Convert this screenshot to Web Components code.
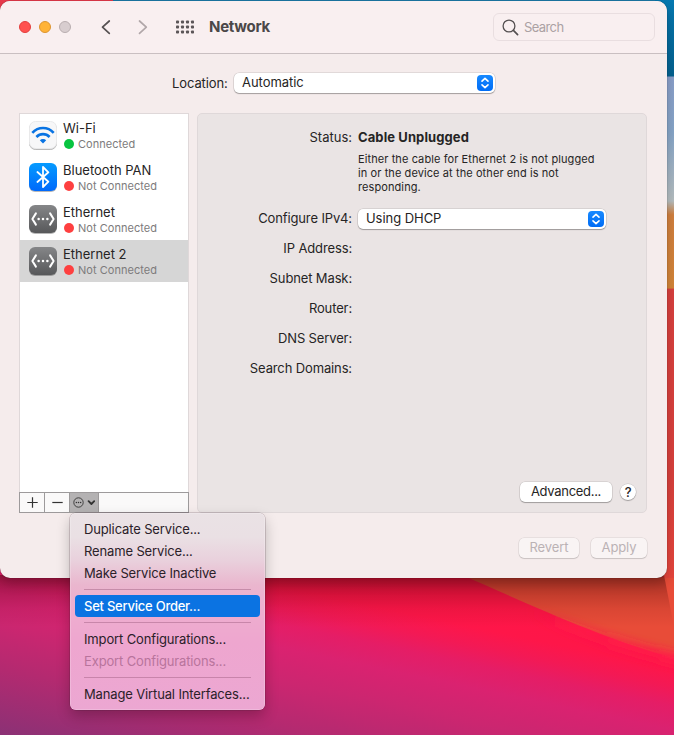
<!DOCTYPE html>
<html lang="en">
<head>
<meta charset="utf-8">
<title>Network</title>
<style>
html,body{margin:0;padding:0;width:674px;height:735px;overflow:hidden}
body{font-family:Inter,"Liberation Sans",sans-serif;font-size:13px;color:#262424;-webkit-font-smoothing:antialiased}
</style>
</head>
<body>
<network-desktop></network-desktop>
<script>
const define = (name, html, ready) => {
  const tpl = document.createElement('template');
  tpl.innerHTML = '<style>*{box-sizing:border-box}:host{box-sizing:border-box}</style>' + html;
  customElements.define(name, class extends HTMLElement {
    constructor() {
      super();
      this.attachShadow({mode: 'open'}).append(tpl.content.cloneNode(true));
    }
    connectedCallback() { if (ready) ready(this, this.shadowRoot); }
  });
};

define('wall-paper', `
<style>:host{display:block;width:674px;height:735px}svg{display:block}</style>
<svg width="674" height="735" viewBox="0 0 674 735">
<defs>
<linearGradient id="base" x1="0" y1="500" x2="-47" y2="725" gradientUnits="userSpaceOnUse">
<stop offset="0" stop-color="#ff1646"/><stop offset=".12" stop-color="#fe1649"/><stop offset=".2" stop-color="#f31955"/><stop offset=".28" stop-color="#e51d66"/><stop offset=".38" stop-color="#da2270"/><stop offset=".52" stop-color="#cc2670"/><stop offset=".72" stop-color="#b32a70"/><stop offset="1" stop-color="#8b3175"/></linearGradient>
<linearGradient id="orange" x1="0" y1="580" x2="-8" y2="658" gradientUnits="userSpaceOnUse"><stop offset="0" stop-color="#e84c38"/><stop offset=".5" stop-color="#f2453c"/><stop offset=".9" stop-color="#fd3242"/><stop offset="1.0" stop-color="#ff2946"/></linearGradient>
<linearGradient id="fade" x1="530" y1="0" x2="674" y2="0" gradientUnits="userSpaceOnUse"><stop offset="0" stop-color="#ff1b48" stop-opacity="0"/><stop offset="1" stop-color="#ff1b48"/></linearGradient>
<filter id="soft" x="-10%" y="-30%" width="120%" height="160%"><feGaussianBlur stdDeviation="4"/></filter>
<linearGradient id="edge" x1="0" y1="0" x2="0" y2="600" gradientUnits="userSpaceOnUse">
<stop offset="0" stop-color="#0678b0"/><stop offset=".127" stop-color="#04618f"/><stop offset=".128" stop-color="#8a9fca"/><stop offset=".22" stop-color="#86a5c8"/><stop offset=".335" stop-color="#b5bdbf"/><stop offset=".358" stop-color="#d17f3e"/><stop offset=".48" stop-color="#d38538"/><stop offset=".482" stop-color="#d8403e"/><stop offset=".8" stop-color="#d8403c"/><stop offset="1" stop-color="#e8463c"/></linearGradient>
<linearGradient id="shade" x1="0" y1="575" x2="0" y2="627" gradientUnits="userSpaceOnUse"><stop offset="0" stop-color="#300" stop-opacity=".4"/><stop offset=".3" stop-color="#300" stop-opacity=".24"/><stop offset=".65" stop-color="#300" stop-opacity=".08"/><stop offset="1" stop-color="#300" stop-opacity="0"/></linearGradient>
</defs>
<rect width="674" height="735" fill="url(#base)"/>
<path d="M462 575C520 600 600 638 674 658V540H462Z" fill="url(#orange)"/>
<path d="M530 610C570 628 630 650 690 662" fill="none" stroke="url(#fade)" stroke-width="12" filter="url(#soft)"/>
<rect x="640" width="34" height="578" fill="url(#edge)"/>
<rect width="114" height="20" fill="#e83a4c"/><rect x="113" width="561" height="20" fill="#1c7cab"/>
<rect x="655" width="19" height="40" fill="url(#edge)"/>
<path d="M0 575H664L674 627H0Z" fill="url(#shade)"/>
</svg>`);

define('mac-window', `
<style>
:host{display:flex;flex-direction:column;width:667px;height:577px;background:#f5ecec;border-radius:10px;box-shadow:0 0 1px rgba(0,0,0,.6),0 6px 12px rgba(0,0,0,.2);overflow:hidden}
</style><slot></slot>`);

define('tool-bar', `
<style>
:host{display:flex;align-items:center;height:53px;background:#f9eff0;border-bottom:1px solid #c9bfc1;padding:0 12px 0 19px;flex:none}
i{display:block;width:12px;height:12px;border-radius:50%;margin-right:8px;border:1px solid}
.r{background:#ff5250;border-color:#e33e3d}.y{background:#ffb338;border-color:#dd9430}.g{background:#d8cdcf;border-color:#b9aeb0}
svg{display:block;flex:none}
b{font-size:15px;font-weight:700;color:#4b4748;margin-left:15px;letter-spacing:-.3px;padding-bottom:1px}
.f{margin-left:auto;display:flex;align-items:center;width:162px;height:28px;border:1px solid #e9dee0;border-radius:6px;padding-left:8px;color:#aba1a3;letter-spacing:-.6px}
.f span{margin-left:5px;letter-spacing:-.6px}
</style>
<i class="r"></i><i class="y"></i><i class="g"></i>
<svg style="margin-left:17px" width="58" height="20" viewBox="0 0 58 20" fill="none" stroke-width="1.7" stroke-linecap="round" stroke-linejoin="round"><path d="M13.3 4 6.5 10.2l6.8 6.2" stroke="#565152"/><path d="M43.5 4 50.3 10.2l-6.8 6.2" stroke="#b1a7a9"/></svg>
<svg id="grid" style="margin-left:22px" width="18" height="14" viewBox="0 0 18 14" fill="#5c5658"></svg>
<b>Network</b>
<div class="f"><svg width="17" height="17" viewBox="0 0 17 17" fill="none" stroke="#555051" stroke-width="1.3" stroke-linecap="round"><circle cx="7" cy="7" r="5.9"/><path d="M11.4 11.4 15.6 15.6" stroke-width="1.7"/></svg><span>Search</span></div>`,
(el, root) => {
  let s = '';
  for (let y = 0; y < 3; y++) for (let x = 0; x < 4; x++) s += `<rect x="${x*5}" y="${.5+y*5}" width="3" height="3" rx=".8"/>`;
  root.getElementById('grid').innerHTML = s;
});

define('pop-up', `
<style>
:host{display:flex;align-items:center;justify-content:space-between;height:20px;background:#fff;border-radius:5px;padding:0 2px 0 8px;box-shadow:0 0 0 .5px rgba(0,0,0,.16),0 1px 1px rgba(0,0,0,.27);letter-spacing:-.05px}
svg{display:block}
span{padding-bottom:2px}
</style><span><slot></slot></span>
<svg width="16" height="16" viewBox="0 0 16 16"><defs><linearGradient id="b" x2="0" y2="1"><stop stop-color="#1789ff"/><stop offset="1" stop-color="#006cf5"/></linearGradient></defs><rect width="16" height="16" rx="4" fill="url(#b)"/><path d="M5 6.2 8 3.4l3 2.8M5 9.8l3 2.8 3-2.8" fill="none" stroke="#fff" stroke-width="1.6" stroke-linecap="round" stroke-linejoin="round"/></svg>`);

define('push-button', `
<style>
:host{display:flex;align-items:center;justify-content:center;height:20px;padding-bottom:2px;background:#fff;border-radius:5px;letter-spacing:-.3px;box-shadow:0 0 0 .5px rgba(0,0,0,.15),0 1px 1px rgba(0,0,0,.26)}
:host([disabled]){background:#f9f4f4;color:#bbb2b4;letter-spacing:-.1px;box-shadow:0 0 0 .5px rgba(0,0,0,.11),0 1px 1px rgba(0,0,0,.13)}
:host([round]){border-radius:50%;width:16px;height:16px;font-weight:500;padding:0}
</style><slot></slot>`);

const icons = {
  wifi: `<rect x=".5" y=".5" width="27" height="27" rx="6" fill="#f7f7f8" stroke="#e9e9ea"/><g fill="none" stroke="#0873e3" stroke-width="2.6"><path d="M3.3 11.8C9.2 5.4 18.8 5.4 24.7 11.8"/><path d="M7.4 16C11.2 12.2 16.8 12.2 20.6 16"/></g><path d="M10.8 19.2C12.5 17.6 15.5 17.6 17.2 19.2L14 22.5Z" fill="#0873e3"/>`,
  bt: `<defs><linearGradient id="g" x2="0" y2="1"><stop stop-color="#059bff"/><stop offset="1" stop-color="#0069fb"/></linearGradient></defs><rect width="28" height="28" rx="6" fill="url(#g)"/><path d="M8.4 9 19.4 18.7 14 24V4L19.4 9.3 8.4 19" fill="none" stroke="#fff" stroke-width="1.8" stroke-linejoin="round" stroke-linecap="round"/>`,
  eth: `<defs><linearGradient id="g" x2="0" y2="1"><stop stop-color="#858688"/><stop offset="1" stop-color="#57585a"/></linearGradient></defs><rect width="28" height="28" rx="6" fill="url(#g)"/><g fill="none" stroke="#fff" stroke-width="2" stroke-linecap="round" stroke-linejoin="round"><path d="M6.9 8.4 3.4 14l3.5 5.6M21.1 8.4 24.6 14l-3.5 5.6"/></g><g fill="#fff"><circle cx="9.6" cy="14" r="1.25"/><circle cx="14" cy="14" r="1.25"/><circle cx="18.4" cy="14" r="1.25"/></g>`
};
define('service-row', `
<style>
:host{display:flex;align-items:center;gap:6px;height:42px;padding-left:9px}
:host([selected]){background:#d6d6d6}
svg{display:block;flex:none;overflow:visible;filter:drop-shadow(0 1px .7px rgba(0,0,0,.28))}
.t{display:flex;flex-direction:column;gap:1px;padding-top:1px}
.n{height:16px;line-height:16px;letter-spacing:0}
.s{display:flex;align-items:center;height:15px;font-size:11px;color:#7d7b7c;gap:4px;letter-spacing:.03px}
.s i{width:10px;height:10px;border-radius:50%;background:#fe4040;margin-left:1px}
:host([on]) .s i{background:#08c440}
</style>
<svg width="28" height="28" viewBox="0 0 28 28"></svg>
<div class="t"><div class="n"><slot></slot></div><div class="s"><i></i><span></span></div></div>`,
(el, root) => {
  root.querySelector('svg').innerHTML = icons[el.getAttribute('icon')];
  root.querySelector('span').textContent = el.hasAttribute('on') ? 'Connected' : 'Not Connected';
});

define('service-list', `
<style>
:host{display:flex;flex-direction:column;width:170px;height:400px;flex:none}
.l{flex:1;background:#fff;border:1px solid #dfd8d9;border-bottom:0}
.b{display:flex;height:21px;background:#faf9f9;border:1px solid #9d9a9b}
.b div{display:flex;align-items:center;justify-content:center;width:25px;border-right:1px solid #9d9a9b}
.b div.m{width:29px;background:#b4b2b3}
svg{display:block}
</style>
<div class="l"><slot></slot></div>
<div class="b">
<div><svg width="11" height="11" viewBox="0 0 11 11" stroke="#333" stroke-width="1.2"><path d="M.3 5.5h10.4M5.5.3v10.4"/></svg></div>
<div><svg width="11" height="11" viewBox="0 0 11 11" stroke="#333" stroke-width="1.2"><path d="M.3 5.5h10.4"/></svg></div>
<div class="m"><svg width="22" height="11" viewBox="0 0 22 11" fill="none" stroke="#333"><circle cx="5.5" cy="5.5" r="4.7" stroke-width=".9"/><g fill="#333" stroke="none"><circle cx="3.4" cy="5.5" r=".75"/><circle cx="5.5" cy="5.5" r=".75"/><circle cx="7.6" cy="5.5" r=".75"/></g><path d="M15.6 4.2 18.4 7l2.8-2.8" stroke-width="1.8" stroke-linecap="round" stroke-linejoin="round"/></svg></div>
</div>`);

define('form-row', `
<style>
:host{display:grid;grid-template-columns:154px 1fr;column-gap:6px;height:30px;align-items:center}
.l{text-align:right;white-space:nowrap;letter-spacing:-.13px;padding-bottom:2px}
:host([first]) .l{padding:0;letter-spacing:0}
</style><div class="l"></div><slot></slot>`,
(el, root) => { root.querySelector('.l').textContent = el.getAttribute('label') + ':'; });

define('detail-panel', `
<style>
:host{display:flex;flex-direction:column;width:450px;height:400px;background:#eae4e4;border:1px solid #dfd8d9;border-radius:5px;padding-top:8px}
b{font-weight:700;letter-spacing:.1px}
p{margin:0 0 10px 160px;font-size:11px;line-height:14px;height:42px;letter-spacing:.09px;white-space:nowrap}
pop-up{width:248px}
.f{margin-top:auto;display:flex;gap:8px;align-items:center;justify-content:flex-end;padding:0 10px 10px 0}
</style>
<form-row first label="Status"><b>Cable Unplugged</b></form-row>
<p>Either the cable for Ethernet 2 is not plugged<br>in or the device at the other end is not<br>responding.</p>
<form-row label="Configure IPv4"><pop-up>Using DHCP</pop-up></form-row>
<form-row label="IP Address"></form-row>
<form-row label="Subnet Mask"></form-row>
<form-row label="Router"></form-row>
<form-row label="DNS Server"></form-row>
<form-row label="Search Domains"></form-row>
<div class="f"><push-button style="width:92px">Advanced...</push-button><push-button round>?</push-button></div>`);

define('menu-item', `
<style>
:host{display:flex;align-items:center;height:22px;padding-left:9px;margin:0 5px;border-radius:4px;color:#2b2129;white-space:nowrap;letter-spacing:-.14px}
:host([disabled]){color:#b8749c}
:host([active]){background:#0b73e2;color:#fff;font-weight:500;letter-spacing:-.24px}
</style><slot></slot>`);

define('menu-rule', `<style>:host{display:block;height:11px;margin:0 14px;padding-top:5px}div{height:1px;background:rgba(125,60,95,.33)}</style><div></div>`);

define('context-menu', `
<style>
:host{display:block;width:195px;height:197px;padding:5px 0;border-radius:6px;background:linear-gradient(#eae2e5 0,#eae0e4 24px,#e9d0dc 48px,#eab6ce 72px,#eeafcf 92px,#eea6cf 130px,#eca7d2 100%);box-shadow:0 0 0 .5px rgba(60,30,50,.35),inset 0 0 0 .5px rgba(255,255,255,.4),0 6px 14px rgba(0,0,0,.24)}
</style><slot></slot>`);

define('network-desktop', `
<style>
:host{display:grid;width:674px;height:735px;overflow:hidden}
wall-paper,.w{grid-area:1/1}
.w{padding-top:1px}
.loc{display:flex;align-items:center;margin:19px 0 0 172px;height:20px}
.loc span{width:62px;letter-spacing:-.1px;padding-bottom:1px}
.loc pop-up{width:261px}
.main{display:flex;gap:8px;margin:20px 0 0 19px}
.end{display:flex;justify-content:flex-end;gap:12px;margin:25px 20px 0 0}
context-menu{position:absolute;left:70px;top:513px}
</style>
<wall-paper></wall-paper>
<div class="w">
<mac-window>
<tool-bar></tool-bar>
<div class="loc"><span>Location:</span><pop-up>Automatic</pop-up></div>
<div class="main">
<service-list>
<service-row icon="wifi" on>Wi-Fi</service-row>
<service-row icon="bt">Bluetooth PAN</service-row>
<service-row icon="eth">Ethernet</service-row>
<service-row icon="eth" selected>Ethernet 2</service-row>
</service-list>
<detail-panel></detail-panel>
</div>
<div class="end"><push-button disabled style="width:60px">Revert</push-button><push-button disabled style="width:56px">Apply</push-button></div>
</mac-window>
</div>
<context-menu>
<menu-item>Duplicate Service...</menu-item>
<menu-item>Rename Service...</menu-item>
<menu-item>Make Service Inactive</menu-item>
<menu-rule></menu-rule>
<menu-item active>Set Service Order...</menu-item>
<menu-rule></menu-rule>
<menu-item>Import Configurations...</menu-item>
<menu-item disabled>Export Configurations...</menu-item>
<menu-rule></menu-rule>
<menu-item>Manage Virtual Interfaces...</menu-item>
</context-menu>`);
</script>
</body>
</html>
